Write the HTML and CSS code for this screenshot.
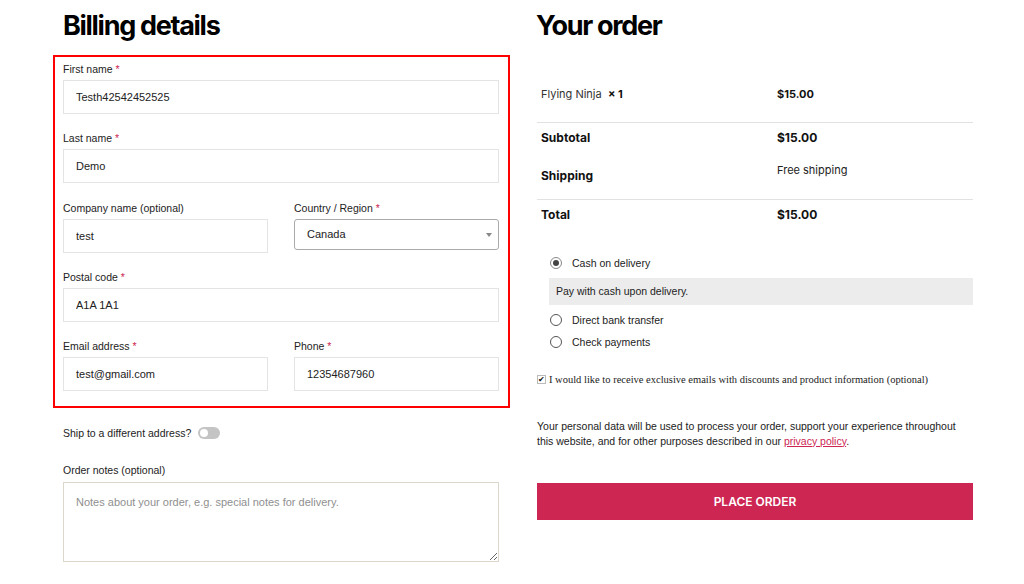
FILE: index.html
```html
<!DOCTYPE html>
<html lang="en">
<head>
    <meta charset="UTF-8">
    <title>Checkout</title>
    <link rel="stylesheet" href="styles.css">
</head>
<body>
    <div class="checkout">
        <section class="billing">
            <h3 class="title">Billing details</h3>
            <div class="fields">
                <div class="field">
                    <label>First name <abbr>*</abbr></label>
                    <input class="text" type="text" value="Testh42542452525">
                </div>
                <div class="field">
                    <label>Last name <abbr>*</abbr></label>
                    <input class="text" type="text" value="Demo">
                </div>
                <div class="half">
                    <div class="field">
                        <label>Company name (optional)</label>
                        <input class="text" type="text" value="test">
                    </div>
                    <div class="field">
                        <label>Country / Region <abbr>*</abbr></label>
                        <div class="select">Canada<span class="arrow"></span></div>
                    </div>
                </div>
                <div class="field">
                    <label>Postal code <abbr>*</abbr></label>
                    <input class="text" type="text" value="A1A 1A1">
                </div>
                <div class="half">
                    <div class="field">
                        <label>Email address <abbr>*</abbr></label>
                        <input class="text" type="text" value="test@gmail.com">
                    </div>
                    <div class="field">
                        <label>Phone <abbr>*</abbr></label>
                        <input class="text" type="text" value="12354687960">
                    </div>
                </div>
            </div>

            <div class="ship">Ship to a different address? <span class="toggle"></span></div>

            <div class="field notes">
                <label>Order notes (optional)</label>
                <textarea placeholder="Notes about your order, e.g. special notes for delivery."></textarea>
            </div>
        </section>

        <section class="review">
            <h3 class="title">Your order</h3>
            <table class="order-table">
                <tr class="item">
                    <td>Flying Ninja&nbsp; <strong>× 1</strong></td>
                    <td><strong>$15.00</strong></td>
                </tr>
                <tr class="subtotal">
                    <th>Subtotal</th>
                    <td><strong>$15.00</strong></td>
                </tr>
                <tr class="shipping">
                    <th>Shipping</th>
                    <td>Free shipping</td>
                </tr>
                <tr class="total">
                    <th>Total</th>
                    <td><strong>$15.00</strong></td>
                </tr>
            </table>

            <ul class="methods">
                <li><span class="radio checked"></span>Cash on delivery</li>
                <li class="desc">Pay with cash upon delivery.</li>
                <li><span class="radio"></span>Direct bank transfer</li>
                <li><span class="radio"></span>Check payments</li>
            </ul>

            <div class="optin"><span class="check">&#10004;</span>I would like to receive exclusive emails with discounts and product information (optional)</div>

            <p class="privacy">Your personal data will be used to process your order, support your experience throughout this website, and for other purposes described in our <a href="#">privacy policy</a>.</p>

            <button class="place-order">PLACE ORDER</button>
        </section>
    </div>
</body>
</html>
```

FILE: styles.css
```css
*{
    margin: 0;
    padding: 0;
    box-sizing: border-box;
}
body{
    background: #fff;
    color: #222;
    font-family: "Liberation Sans", Arial, sans-serif;
}
ul{
    list-style: none;
}
.checkout{
    display: grid;
    grid-template-columns: 457px 436px;
    column-gap: 27px;
    padding-left: 53px;
}
.title{
    font-family: Inter, sans-serif;
    font-size: 27px;
    font-weight: 700;
    letter-spacing: -1.3px;
    line-height: 34px;
    color: #000;
    margin-top: 9px;
    margin-bottom: 12px;
}
.billing .title{
    padding-left: 10px;
}
.review .title{
    margin-left: -1px;
}

/* billing fields */
.fields{
    border: 2px solid #f00;
    padding: 3px 9px 15px 8px;
    display: flex;
    flex-direction: column;
    gap: 15.3px;
}
.field label{
    display: block;
    font-size: 10.5px;
    line-height: 18px;
    color: #222;
    margin-bottom: 2px;
}
.field abbr{
    color: #cd2653;
    text-decoration: none;
}
.text{
    display: block;
    width: 100%;
    height: 34px;
    border: 1px solid #e4e4e4;
    padding: 0 12px;
    font-family: "Liberation Sans", Arial, sans-serif;
    font-size: 11px;
    color: #222;
    outline: none;
}
.half{
    display: grid;
    grid-template-columns: 1fr 1fr;
    column-gap: 26px;
}
.select{
    position: relative;
    height: 31px;
    border: 1px solid #aaa;
    border-radius: 3px;
    padding-left: 12px;
    font-size: 11px;
    line-height: 29px;
    color: #222;
}
.select .arrow{
    position: absolute;
    right: 6px;
    top: 13px;
    border-left: 3px solid transparent;
    border-right: 3px solid transparent;
    border-top: 4px solid #888;
}

.ship{
    display: flex;
    align-items: center;
    gap: 7px;
    margin-top: 17px;
    padding-left: 10px;
    font-size: 10.5px;
    line-height: 16px;
}
.toggle{
    position: relative;
    width: 22px;
    height: 12px;
    border-radius: 6px;
    background: #c4c4c4;
}
.toggle::after{
    content: "";
    position: absolute;
    left: 2px;
    top: 2px;
    width: 8px;
    height: 8px;
    border-radius: 50%;
    background: #fff;
}
.notes{
    margin-top: 20px;
    padding-left: 10px;
    padding-right: 11px;
}
.notes label{
    margin-bottom: 3px;
}
.notes textarea{
    display: block;
    width: 100%;
    height: 80px;
    border: 1px solid #dcd7ca;
    padding: 13px 12px;
    font-family: "Liberation Sans", Arial, sans-serif;
    font-size: 11px;
    color: #222;
    outline: none;
}
.notes textarea::placeholder{
    color: #8f8f8f;
}

/* order review */
.order-table{
    width: 100%;
    border-collapse: collapse;
    margin-top: 23px;
    font-family: Inter, sans-serif;
    font-size: 12px;
    line-height: 16px;
    color: #111;
}
.order-table th,
.order-table td{
    text-align: left;
    padding: 7px 4px;
}
.order-table th,
.order-table td:first-child{
    width: 240px;
    font-weight: 700;
}
.order-table tr > :last-child{
    padding-left: 0;
}
.order-table .item td{
    padding-top: 20px;
    padding-bottom: 20px;
    font-size: 11px;
    font-weight: 400;
    color: #333;
    border-bottom: 1px solid #e1e1e1;
}
.order-table .item strong{
    color: #111;
}
.order-table .shipping th{
    height: 46px;
    border-bottom: 1px solid #e1e1e1;
    padding-top: 8px;
}
.order-table .shipping td{
    vertical-align: top;
    padding-top: 9px;
    font-size: 11px;
    font-weight: 400;
    color: #222;
    border-bottom: 1px solid #e1e1e1;
}
.order-table .total th,
.order-table .total td{
    padding-top: 7px;
    padding-bottom: 6px;
}

.methods{
    margin-top: 23px;
    padding-left: 13px;
    font-size: 10.5px;
    line-height: 16px;
    color: #222;
}
.methods li{
    display: flex;
    align-items: center;
    gap: 10px;
    padding: 3px 0;
}
.methods li.desc{
    margin: 4px 0 4px -1px;
    padding: 0 7px;
    height: 27px;
    background: #ececec;
}
.radio{
    width: 12px;
    height: 12px;
    border: 1px solid #555;
    border-radius: 50%;
    display: flex;
    align-items: center;
    justify-content: center;
}
.radio.checked{
    border-color: #888;
}
.radio.checked::after{
    content: "";
    width: 6px;
    height: 6px;
    border-radius: 50%;
    background: #444;
}

.optin{
    display: flex;
    align-items: center;
    gap: 3px;
    margin-top: 19px;
    font-family: "Liberation Serif", "Times New Roman", serif;
    font-size: 10.5px;
    line-height: 16px;
    color: #222;
}
.check{
    width: 9px;
    height: 9px;
    border: 1px solid #bbb;
    font-size: 8px;
    line-height: 8px;
    text-align: center;
    color: #111;
}

.privacy{
    margin-top: 31px;
    font-size: 10.5px;
    line-height: 15px;
    color: #222;
}
.privacy a{
    color: #cd2653;
}
.place-order{
    display: block;
    width: 100%;
    height: 37px;
    margin-top: 34px;
    border: none;
    background: #cd2653;
    color: #fff;
    font-family: Inter, sans-serif;
    font-size: 12px;
    font-weight: 600;
    cursor: pointer;
}
```
